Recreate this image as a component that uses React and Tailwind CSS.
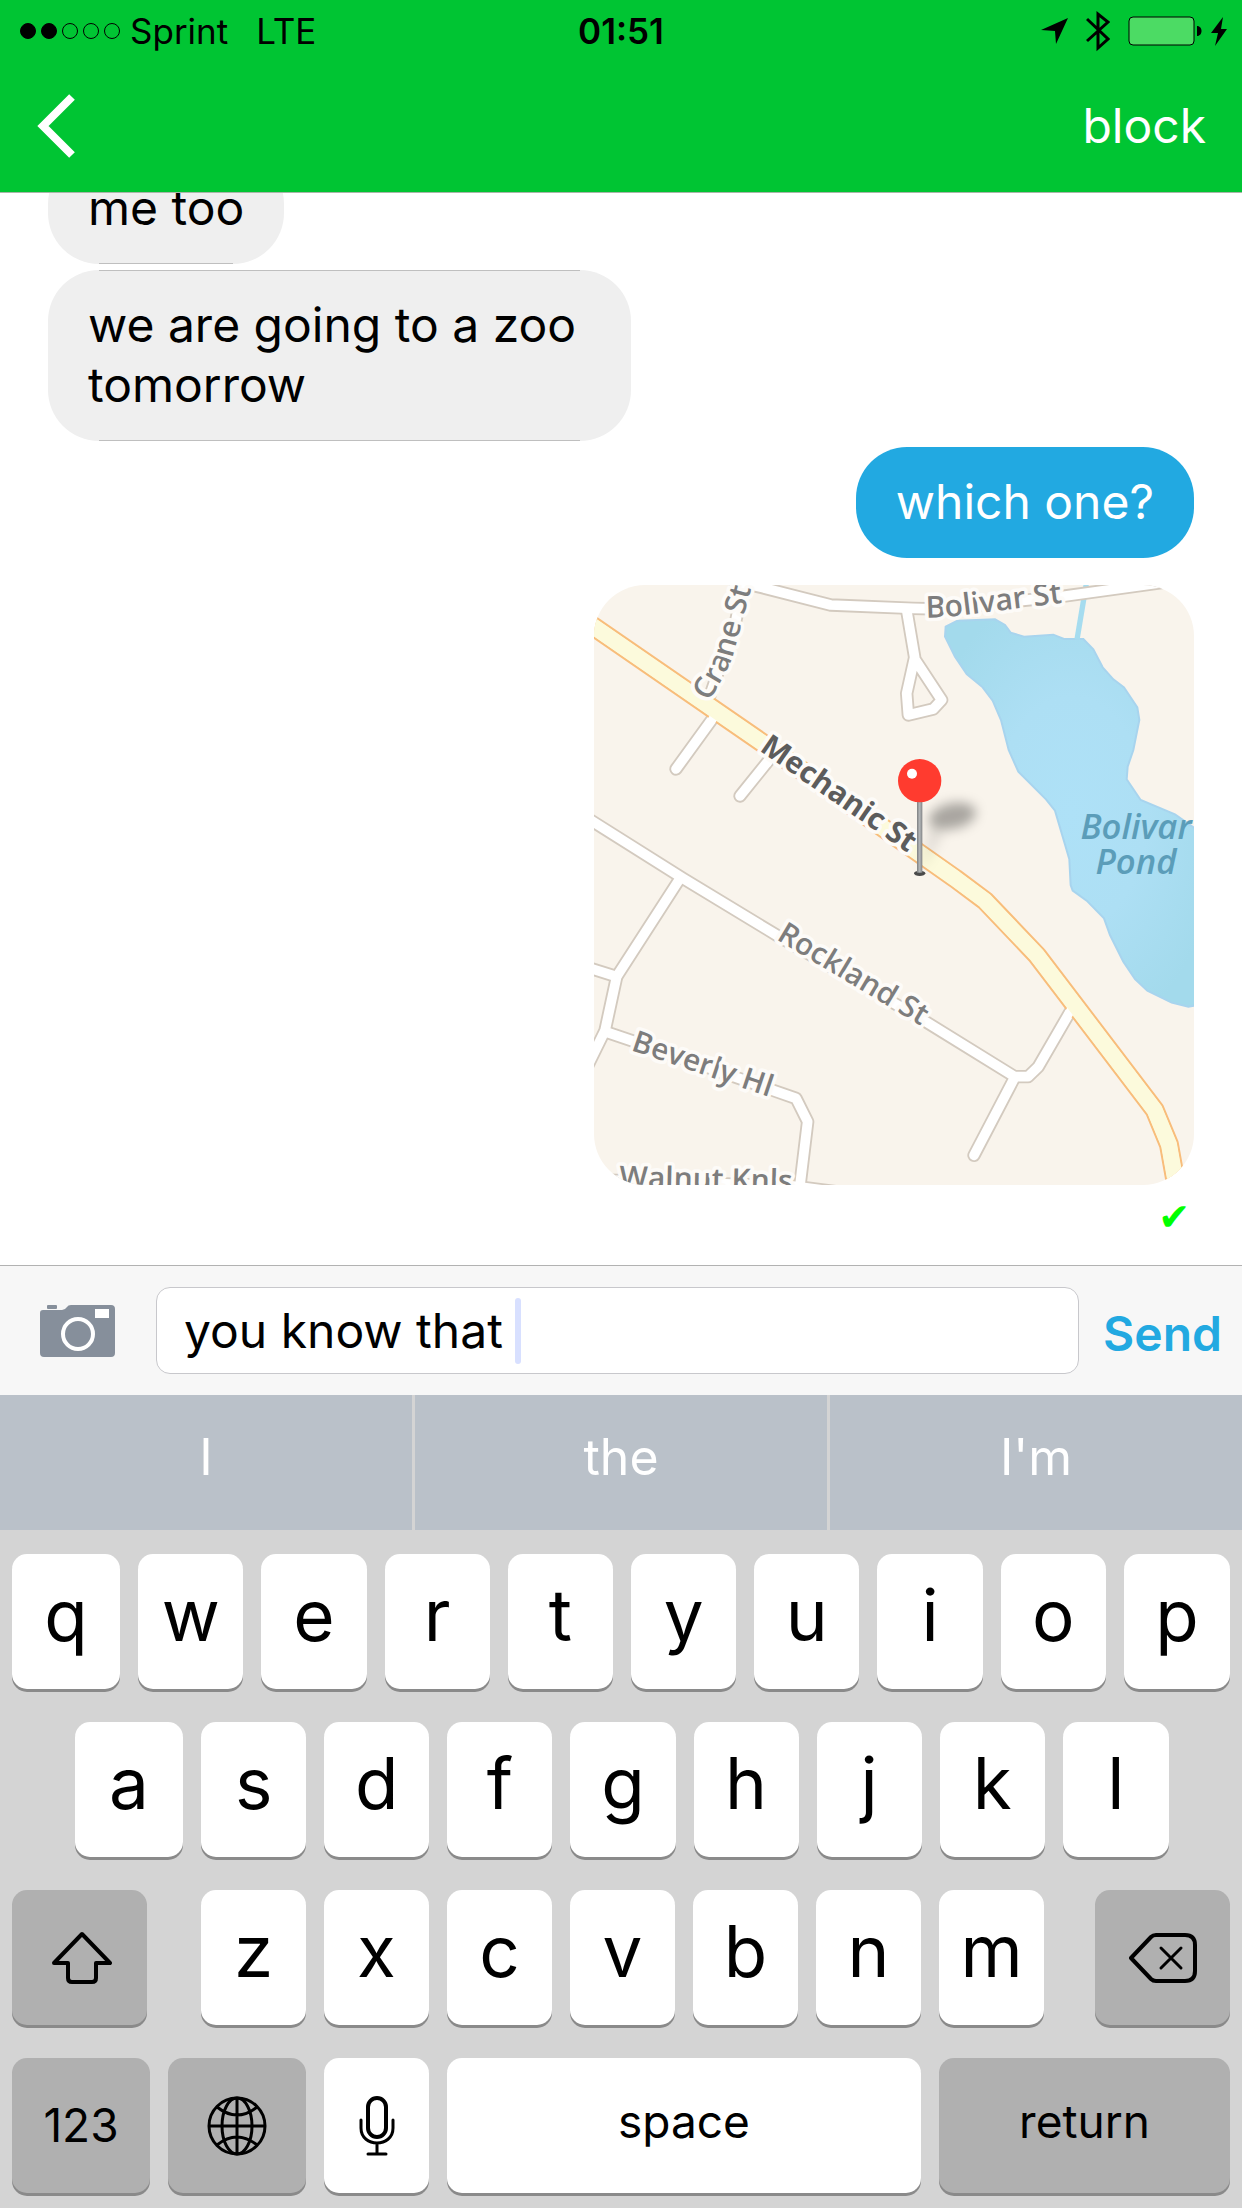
import React from "react";

function SignalDots() {
  return (
    <span className="flex gap-[5px]" role="img" aria-label="Signal strength">
      {[true, true, false, false, false].map((on, i) => (
        <span
          key={i}
          className={
            on
              ? "size-4 rounded-full border border-black bg-black"
              : "size-4 rounded-full border border-black"
          }
        />
      ))}
    </span>
  );
}

function StatusBar() {
  return (
    <div className="grid h-[62px] grid-cols-3 items-center px-5 text-[35px] leading-none text-black">
      <div className="flex items-center">
        <SignalDots />
        <span className="ml-2.5">Sprint</span>
        <span className="ml-7">LTE</span>
      </div>
      <div className="text-center font-semibold">01:51</div>
      <div className="flex items-center justify-end -mr-[5px]">
        <svg width="27" height="26" viewBox="0 0 27 26" aria-hidden="true">
          <path d="M0 12L27 0L15 26L14 13Z" />
        </svg>
        <svg className="ml-[18px]" width="24" height="42" viewBox="0 0 24 42" fill="none" stroke="black" strokeWidth="3" aria-hidden="true">
          <path d="M1 9L22 29L12 38V4L22 12L1 31" />
        </svg>
        <svg className="ml-[18px]" width="74" height="30" viewBox="0 0 74 30" aria-hidden="true">
          <rect x="1" y="1" width="65" height="28" rx="4" fill="#4cdb64" stroke="black" strokeWidth="1" />
          <path d="M69 10C75 10 75 20 69 20Z" />
        </svg>
        <svg className="ml-[9px]" width="16" height="29" viewBox="0 0 16 29" aria-hidden="true">
          <path d="M12 0L0 16H7L4 29L16 12H10Z" />
        </svg>
      </div>
    </div>
  );
}

function Header() {
  return (
    <header className="relative z-10 shrink-0 border-b border-[#a9b5a9] bg-[#00c533]">
      <StatusBar />
      <nav className="flex h-[130px] items-center justify-between px-9 pb-0.5">
        <button type="button" aria-label="Back">
          <svg width="40" height="64" viewBox="0 0 40 64" fill="none" stroke="white" strokeWidth="8">
            <path d="M36 3L7 32L36 61" />
          </svg>
        </button>
        <button type="button" className="text-[48px] leading-[60px] text-white">
          block
        </button>
      </nav>
    </header>
  );
}

function Incoming({ children }) {
  return (
    <p className="relative max-w-[583px] self-start rounded-[51px] bg-[#efefef] px-10 pt-[25px] pb-[26px] text-black before:absolute before:inset-x-[51px] before:top-0 before:h-px before:bg-[#bfbfbf] after:absolute after:inset-x-[51px] after:bottom-0 after:h-px after:bg-[#bfbfbf]">
      {children}
    </p>
  );
}

const whiteRoads = [
  "M-30 693L267 880L552 1053L987 1305L1262 1475H1302L1333 1445L1440 1260",
  "M1258 1485L1140 1711",
  "M255 885L68 1175L33 1337L-30 1465",
  "M-30 1144L68 1175",
  "M33 1340L113 1367L528 1513L606 1540L641 1610L618 1800",
  "M-20 1783L597 1803L740 1822",
  "M420 -12L506 8L710 60L957 70L1040 72L1398 35L1740 -12",
  "M938 75L962 217L938 325L943 390L1018 372L1043 345L962 222",
  "M447 0L426 105L345 340",
  "M360 395L246 552",
  "M525 525L438 633",
];

const pond =
  "M1055 125L1090 107L1203 103L1233 120L1250 143L1290 155L1378 149L1410 162H1468L1498 193L1526 247L1558 283L1590 307L1630 367L1636 405L1618 495L1601 545L1598 583L1640 645L1743 688L1810 735V1260L1783 1265L1733 1253L1660 1217L1623 1182L1588 1130L1548 1050L1530 1000L1478 947L1436 917L1430 900L1426 823L1383 677L1356 643L1273 560L1244 495L1221 405L1196 347L1166 307L1118 267L1083 215L1053 155Z";

const mainRoad =
  "M-30 105L513 479L1083 880L1173 947L1329 1111L1682 1575L1725 1679L1752 1830";

const streetLabels = [
  { id: "crane", name: "Crane St", d: "M345 350L386 280L413 225L428 170L443 115L460 55L490 -60" },
  { id: "bolivar", name: "Bolivar St", d: "M996 98L1060 96L1393 55L1500 42" },
  { id: "rockland", name: "Rockland St", d: "M545 1062L968 1315L1100 1394" },
  { id: "beverly", name: "Beverly Hl", d: "M109 1395L508 1530L700 1595" },
  { id: "walnut", name: "Walnut Knls", d: "M76 1807L700 1821" },
];

function MapMessage() {
  return (
    <svg
      className="size-[600px] shrink-0 self-end rounded-[51px]"
      viewBox="0 0 1800 1800"
      role="img"
      aria-label="Map with a pin on Mechanic St"
      fontFamily="Open Sans, Noto Sans, sans-serif"
    >
      <defs>
        <radialGradient id="water" cx="50%" cy="50%" r="60%">
          <stop offset="0" stopColor="#aee1f7" />
          <stop offset="0.5" stopColor="#addff4" />
          <stop offset="1" stopColor="#a3daec" />
        </radialGradient>
        <linearGradient id="needle">
          <stop offset="0" stopColor="#7d7f80" />
          <stop offset="0.5" stopColor="#b4b7b9" />
          <stop offset="1" stopColor="#808284" />
        </linearGradient>
        <filter id="soft" x="-50%" y="-50%" width="200%" height="200%">
          <feGaussianBlur stdDeviation="18" />
        </filter>
        {streetLabels.map((s) => (
          <path key={s.id} id={s.id} d={s.d} />
        ))}
        <path id="mechanic" d="M494 496L943 805L1090 905" />
      </defs>

      <rect width="1800" height="1800" fill="#f9f4ec" />
      <path d={pond} fill="url(#water)" stroke="#a8d4ee" strokeWidth="6" />
      <path d="M1449 164L1478 -10" stroke="#a6dcef" strokeWidth="16" />

      <g fill="none" strokeLinecap="round" strokeLinejoin="round">
        {whiteRoads.map((d) => (
          <path key={d} d={d} stroke="#d3cabf" strokeWidth="40" />
        ))}
        {whiteRoads.map((d) => (
          <path key={d} d={d} stroke="#ffffff" strokeWidth="29" />
        ))}
      </g>
      <g fill="none" strokeLinejoin="round">
        <path d={mainRoad} stroke="#f8bd7b" strokeWidth="60" />
        <path d={mainRoad} stroke="#fcfadc" strokeWidth="48" />
        <path d="M352 408L366 386M517 538L530 518M1422 1290L1436 1266" stroke="#ffffff" strokeWidth="26" />
        <path d={mainRoad} stroke="#fcfadc" strokeWidth="46" />
      </g>

      <g
        fill="#7d7d7d"
        stroke="#fdfbf8"
        strokeWidth="22"
        strokeLinejoin="round"
        paintOrder="stroke"
        fontSize="90"
        fontWeight="600"
      >
        {streetLabels.map((s) => (
          <text key={s.id}>
            <textPath href={"#" + s.id}>{s.name}</textPath>
          </text>
        ))}
        <text fill="#5c5c5c" fontWeight="700">
          <textPath href="#mechanic">Mechanic St</textPath>
        </text>
      </g>
      <g fill="#5b9db9" fontSize="104" fontStyle="italic" fontWeight="600" textAnchor="middle">
        <text>
          <tspan x="1626" y="762">Bolivar</tspan>
          <tspan x="1626" y="867">Pond</tspan>
        </text>
      </g>

      <g filter="url(#soft)">
        <ellipse cx="1075" cy="693" rx="72" ry="38" fill="#000000" opacity="0.32" transform="rotate(-12 1075 693)" />
        <path d="M1010 720L1050 740L980 860Z" fill="#000000" opacity="0.1" />
      </g>
      <ellipse cx="977" cy="865" rx="17" ry="8" fill="#4a4a4a" />
      <rect x="969" y="645" width="16" height="218" fill="url(#needle)" />
      <circle cx="977" cy="587" r="65" fill="#ff3b2f" />
      <circle cx="954" cy="566" r="15" fill="#ffffff" />
    </svg>
  );
}

function Messages() {
  return (
    <main className="flex min-h-0 flex-1 flex-col justify-end gap-1.5 overflow-hidden bg-white px-12 text-[48px] leading-[60px]">
      <Incoming>me too</Incoming>
      <Incoming>we are going to a zoo tomorrow</Incoming>
      <p className="mb-[21px] self-end rounded-[51px] bg-[#22a9e1] px-10 pt-[25px] pb-[26px] text-white">
        which one?
      </p>
      <MapMessage />
      <div className="h-[74px] shrink-0 self-end pr-1 pt-1 font-['DejaVu_Sans'] text-[38px] leading-[44px] text-[#00ff00]">
        ✔
      </div>
    </main>
  );
}

function Composer() {
  return (
    <form
      className="flex h-[130px] shrink-0 items-center border-t border-[#b2b2b2] bg-[#f7f7f7] pl-10 pr-5"
      onSubmit={(e) => e.preventDefault()}
    >
      <button type="button" aria-label="Add photo">
        <svg width="75" height="52" viewBox="0 0 75 52">
          <rect x="7" y="0" width="10" height="4" rx="1" fill="#868f9b" />
          <path d="M3 5H22Q25 5 27 2Q28 0 31 0H71Q75 0 75 4V48Q75 52 71 52H4Q0 52 0 48V8Q0 5 3 5Z" fill="#868f9b" />
          <rect x="55" y="4" width="14" height="9" fill="#ffffff" />
          <circle cx="38" cy="29" r="15" fill="none" stroke="#ffffff" strokeWidth="4" />
        </svg>
      </button>
      <label className="ml-[41px] flex h-[87px] flex-1 items-center rounded-[14px] border border-[#c8c8cc] bg-white pl-[27px]">
        <input
          type="text"
          aria-label="Message"
          defaultValue="you know that"
          className="[field-sizing:content] bg-transparent text-[48px] leading-[60px] text-black outline-none"
        />
        <span className="ml-3 h-[66px] w-1.5 rounded-full bg-[#d8e0ff]" />
      </label>
      <button type="submit" className="ml-6 pt-1.5 text-[48px] leading-[60px] font-semibold text-[#22a9e1]">
        Send
      </button>
    </form>
  );
}

function Suggestions() {
  return (
    <div className="grid h-[135px] shrink-0 grid-cols-3 gap-[3px] bg-[#d4d4d4] text-[50px] text-white">
      {["I", "the", "I'm"].map((word) => (
        <button key={word} type="button" className="bg-[#bac1c9] pb-2.5">
          {word}
        </button>
      ))}
    </div>
  );
}

const lightKey =
  "flex h-[135px] min-w-0 items-center justify-center rounded-[15px] bg-white text-black shadow-[0_3px_0_#8a8a8a]";
const darkKey =
  "flex h-[135px] items-center justify-center rounded-[15px] bg-[#b0b0b0] text-black shadow-[0_3px_0_#8a8a8a]";

function Letters({ keys }) {
  return [...keys].map((k) => (
    <button key={k} type="button" className={lightKey + " pb-3 text-[71px] leading-none font-[370]"}>
      {k}
    </button>
  ));
}

function Keyboard() {
  return (
    <section aria-label="Keyboard" className="flex shrink-0 flex-col gap-[33px] bg-[#d4d4d4] px-3 pt-6 pb-[15px]">
      <div className="grid grid-cols-[108fr_repeat(8,105fr)_106fr] gap-[18px]">
        <Letters keys="qwertyuiop" />
      </div>
      <div className="grid grid-cols-[108fr_repeat(7,105fr)_106fr] gap-[18px] pl-[63px] pr-[61px]">
        <Letters keys="asdfghjkl" />
      </div>
      <div className="flex">
        <button type="button" aria-label="Shift" className={darkKey + " w-[135px] pl-1"}>
          <svg width="60" height="54" viewBox="0 0 60 54" fill="none" stroke="black" strokeWidth="4" strokeLinejoin="round">
            <path d="M30 3L58 32H44V47Q44 51 40 51H20Q16 51 16 47V32H2Z" />
          </svg>
        </button>
        <div className="ml-[54px] mr-[51px] grid flex-1 grid-cols-7 gap-[18px]">
          <Letters keys="zxcvbnm" />
        </div>
        <button type="button" aria-label="Delete" className={darkKey + " w-[135px]"}>
          <svg width="68" height="50" viewBox="0 0 68 50" fill="none" stroke="black" strokeWidth="4" strokeLinecap="round" strokeLinejoin="round">
            <path d="M2 25L22 4Q24 2 27 2H56Q66 2 66 12V38Q66 48 56 48H27Q24 48 22 46Z" />
            <path d="M32 15L52 35M52 15L32 35" strokeWidth="3" />
          </svg>
        </button>
      </div>
      <div className="grid grid-cols-[138fr_138fr_105fr_474fr_291fr] gap-[18px] text-[46px]">
        <button type="button" className={darkKey}>123</button>
        <button type="button" aria-label="Next keyboard" className={darkKey}>
          <svg width="60" height="60" viewBox="0 0 60 60" fill="none" stroke="black" strokeWidth="3">
            <circle cx="30" cy="30" r="28" />
            <ellipse cx="30" cy="30" rx="15" ry="28" />
            <path d="M30 2V58M2 30H58M10 11Q30 27 50 11M10 49Q30 33 50 49" />
          </svg>
        </button>
        <button type="button" aria-label="Dictation" className={lightKey}>
          <svg width="36" height="60" viewBox="0 0 36 60" fill="none" stroke="black" strokeWidth="4" strokeLinecap="round">
            <rect x="9" y="2" width="18" height="39" rx="9" />
            <path d="M2 24V32C2 52 34 52 34 32V24M18 48V57M9 58H27" strokeWidth="3" />
          </svg>
        </button>
        <button type="button" className={lightKey + " pb-2"}>space</button>
        <button type="button" className={darkKey + " pb-2"}>return</button>
      </div>
    </section>
  );
}

export default function App() {
  return (
    <div className="flex h-screen flex-col overflow-hidden bg-white font-[Inter,'Liberation_Sans',sans-serif]">
      <Header />
      <Messages />
      <Composer />
      <Suggestions />
      <Keyboard />
    </div>
  );
}
